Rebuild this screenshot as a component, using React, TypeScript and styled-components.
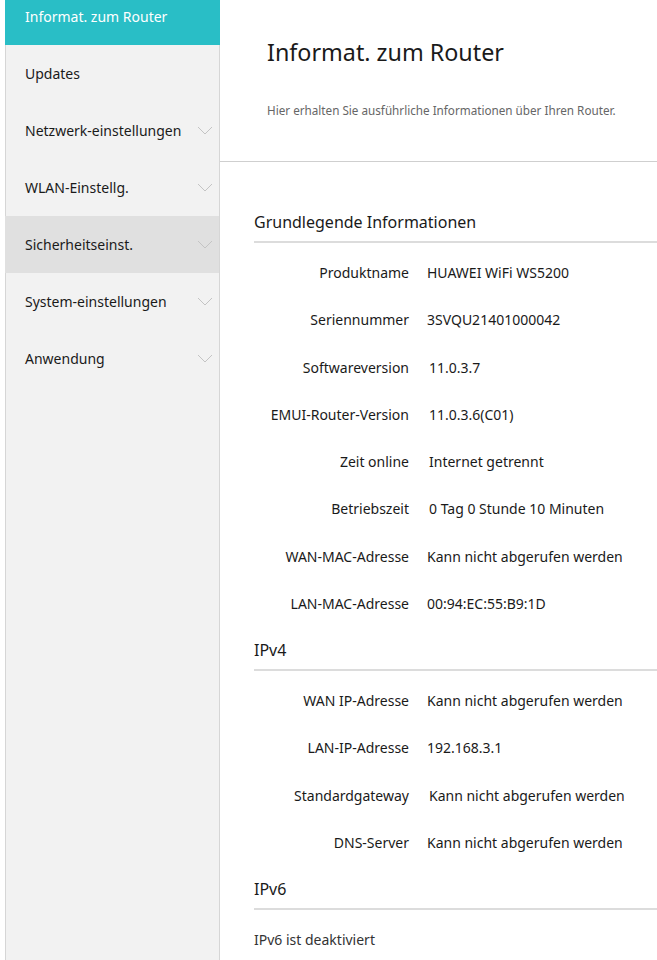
import React from "react";
import styled, { createGlobalStyle } from "styled-components";

const GlobalStyle = createGlobalStyle`
  html, body {
    margin: 0;
    padding: 0;
    background: #ffffff;
    overflow: hidden;
  }
  body {
    font-family: "Noto Sans", "Open Sans", "Liberation Sans", sans-serif;
    color: #333333;
  }
`;

type NavItem = { label: string; sub?: boolean };

const navItems: NavItem[] = [
  { label: "Informat. zum Router" },
  { label: "Updates" },
  { label: "Netzwerk-einstellungen", sub: true },
  { label: "WLAN-Einstellg.", sub: true },
  { label: "Sicherheitseinst.", sub: true },
  { label: "System-einstellungen", sub: true },
  { label: "Anwendung", sub: true },
];

type Info = { label: string; value: string; nudge?: number };

const basic: Info[] = [
  { label: "Produktname", value: "HUAWEI WiFi WS5200" },
  { label: "Seriennummer", value: "3SVQU21401000042" },
  { label: "Softwareversion", value: "11.0.3.7", nudge: 2 },
  { label: "EMUI-Router-Version", value: "11.0.3.6(C01)", nudge: 2 },
  { label: "Zeit online", value: "Internet getrennt", nudge: 2 },
  { label: "Betriebszeit", value: "0 Tag 0 Stunde 10 Minuten", nudge: 2 },
  { label: "WAN-MAC-Adresse", value: "Kann nicht abgerufen werden" },
  { label: "LAN-MAC-Adresse", value: "00:94:EC:55:B9:1D" },
];

const ipv4: Info[] = [
  { label: "WAN IP-Adresse", value: "Kann nicht abgerufen werden" },
  { label: "LAN-IP-Adresse", value: "192.168.3.1" },
  { label: "Standardgateway", value: "Kann nicht abgerufen werden", nudge: 2 },
  { label: "DNS-Server", value: "Kann nicht abgerufen werden" },
];

const Chevron = () => (
  <svg width="16" height="9" viewBox="0 0 16 9" fill="none">
    <path d="M1 1 L8 8 L15 1" stroke="#c4c4c4" strokeWidth="1" />
  </svg>
);

const App = () => {
  return (
    <>
      <GlobalStyle />
      <Page>
        <Sidebar>
          <NavList>
            {navItems.map((item, i) => (
              <NavRow key={item.label} active={i === 0} hovered={i === 4}>
                <NavLabel active={i === 0}>{item.label}</NavLabel>
                {item.sub && <Chevron />}
              </NavRow>
            ))}
          </NavList>
        </Sidebar>
        <Main>
          <Header>
            <Title>Informat. zum Router</Title>
            <Subtitle>
              Hier erhalten Sie ausführliche Informationen über Ihren Router.
            </Subtitle>
          </Header>

          <Section first>
            <SectionTitle>Grundlegende Informationen</SectionTitle>
            <Rows>
              {basic.map((r) => (
                <Row key={r.label}>
                  <Label>{r.label}</Label>
                  <Value nudge={r.nudge ?? 0}>{r.value}</Value>
                </Row>
              ))}
            </Rows>
          </Section>

          <Section>
            <SectionTitle>IPv4</SectionTitle>
            <Rows>
              {ipv4.map((r) => (
                <Row key={r.label}>
                  <Label>{r.label}</Label>
                  <Value nudge={r.nudge ?? 0}>{r.value}</Value>
                </Row>
              ))}
            </Rows>
          </Section>

          <Section>
            <SectionTitle>IPv6</SectionTitle>
            <Rows>
              <PlainRow>IPv6 ist deaktiviert</PlainRow>
            </Rows>
          </Section>
        </Main>
      </Page>
    </>
  );
};

export default App;

const Page = styled.div`
  display: flex;
  width: 657px;
  height: 960px;
  overflow: hidden;
  background: #ffffff;
`;

const Sidebar = styled.aside`
  flex: 0 0 215px;
  margin-left: 5px;
  background: #f2f2f2;
  border-left: 1px solid #d6d6d6;
  border-right: 1px solid #d6d6d6;
  box-sizing: border-box;
`;

const NavList = styled.nav`
  display: flex;
  flex-direction: column;
  margin-top: -12px;
`;

const NavRow = styled.div<{ active?: boolean; hovered?: boolean }>`
  flex-shrink: 0;
  height: 57px;
  display: flex;
  align-items: center;
  justify-content: space-between;
  padding: 0 6px 0 20px;
  background: ${(p) => (p.active ? "#29bec6" : p.hovered ? "#e0e0e0" : "transparent")};
  margin-left: -1px;
  ${(p) => (p.active ? "margin-right: -1px;" : "")}
`;

const NavLabel = styled.span<{ active?: boolean }>`
  font-size: 14px;
  color: ${(p) => (p.active ? "#ffffff" : "#1a1a1a")};
  white-space: nowrap;
`;

const Main = styled.main`
  flex: 1;
  display: flex;
  flex-direction: column;
  min-width: 0;

  & > * {
    flex-shrink: 0;
  }
`;

const Header = styled.header`
  height: 162px;
  border-bottom: 1px solid #cfcfcf;
  padding-left: 47px;
  box-sizing: border-box;
  display: flex;
  flex-direction: column;
`;

const Title = styled.h1`
  margin: 36px 0 0;
  font-size: 23.3px;
  font-weight: 400;
  line-height: 32px;
  color: #1a1a1a;
`;

const Subtitle = styled.p`
  margin: 34px 0 0;
  font-size: 11.7px;
  line-height: 16px;
  color: #666666;
  white-space: nowrap;
`;

const Section = styled.section<{ first?: boolean }>`
  padding-left: 34px;
  margin-top: ${(p) => (p.first ? "50px" : "13px")};
`;

const SectionTitle = styled.h2`
  margin: 0;
  font-size: 16px;
  font-weight: 400;
  line-height: 20px;
  padding-bottom: 9px;
  border-bottom: 2px solid #dcdcdc;
  color: #1a1a1a;
`;

const Rows = styled.div`
  margin-top: 6px;
  display: flex;
  flex-direction: column;
`;

const Row = styled.div`
  height: 47.25px;
  display: grid;
  grid-template-columns: 155px 1fr;
  column-gap: 18px;
  align-items: center;
  font-size: 14px;
  color: #1a1a1a;
`;

const Label = styled.span`
  text-align: right;
  white-space: nowrap;
`;

const Value = styled.span<{ nudge: number }>`
  padding-left: ${(p) => p.nudge}px;
  white-space: nowrap;
`;

const PlainRow = styled.div`
  height: 47.25px;
  display: flex;
  align-items: center;
  font-size: 14px;
  color: #333333;
`;
